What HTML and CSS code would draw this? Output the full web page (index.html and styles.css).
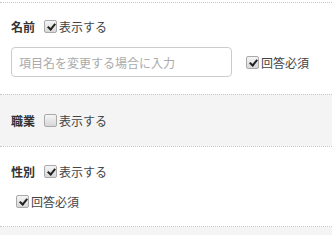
FILE: index.html
```html
<!DOCTYPE html>
<html lang="ja">
<head>
    <meta charset="utf-8">
    <meta name="viewport" content="width=device-width, initial-scale=1.0">
    <title>項目設定</title>
    <link rel="stylesheet" href="styles.css">
</head>
<body>
    <div class="list">
        <div class="item">
            <div class="row">
                <span class="name">名前</span>
                <label class="check"><span class="box on"></span>表示する</label>
            </div>
            <div class="row row-input">
                <input type="text" class="field" placeholder="項目名を変更する場合に入力">
                <label class="check"><span class="box on"></span>回答必須</label>
            </div>
        </div>
        <div class="item gray">
            <div class="row">
                <span class="name">職業</span>
                <label class="check"><span class="box"></span>表示する</label>
            </div>
        </div>
        <div class="item">
            <div class="row">
                <span class="name">性別</span>
                <label class="check"><span class="box on"></span>表示する</label>
            </div>
            <div class="row row-sub">
                <label class="check"><span class="box on"></span>回答必須</label>
            </div>
        </div>
    </div>
</body>
</html>
```

FILE: styles.css
```css
html{
    background-color: rgb(244,244,244);
}
body{
    margin: 0;
    padding-top: 2px;
    background-color: rgb(255,255,255);
    font-family: "Noto Sans CJK JP", "Noto Sans", sans-serif;
    font-size: 12px;
    color: rgb(68,68,68);
}
.list{
    background-color: rgb(255,255,255);
    border-bottom: 1px dotted rgb(200,200,200);
}
.item{
    border-top: 1px dotted rgb(200,200,200);
    padding: 14px 11px 15px 11px;
}
.item:first-child{
    padding-top: 13px;
    padding-bottom: 17px;
}
.gray{
    background-color: rgb(244,244,244);
    padding-top: 15px;
    padding-bottom: 16px;
}
.row{
    display: flex;
    align-items: center;
    height: 20px;
}
.row-input{
    height: 30px;
    margin-top: 11px;
}
.row-sub{
    margin-top: 10px;
    padding-left: 5px;
}
.name{
    font-weight: bold;
    color: rgb(51,51,51);
    margin-right: 9px;
}
.check{
    display: flex;
    align-items: center;
    gap: 2px;
    color: rgb(68,68,68);
}
.box{
    position: relative;
    box-sizing: border-box;
    width: 13px;
    height: 13px;
    border: 1px solid rgb(170,170,170);
    border-radius: 2px;
    background: linear-gradient(rgb(245,245,245), rgb(215,215,215));
}
.box.on::after{
    content: "";
    position: absolute;
    left: 4px;
    top: 1px;
    width: 3px;
    height: 6px;
    border: solid rgb(34,34,34);
    border-width: 0 2px 2px 0;
    transform: rotate(40deg);
}
.field{
    box-sizing: border-box;
    width: 221px;
    height: 30px;
    margin: 0 14px 0 0;
    padding: 0 7px;
    border: 1px solid rgb(204,204,204);
    border-radius: 4px;
    font-family: inherit;
    font-size: 12px;
    outline: none;
}
.field::placeholder{
    color: rgb(170,170,170);
}
```
